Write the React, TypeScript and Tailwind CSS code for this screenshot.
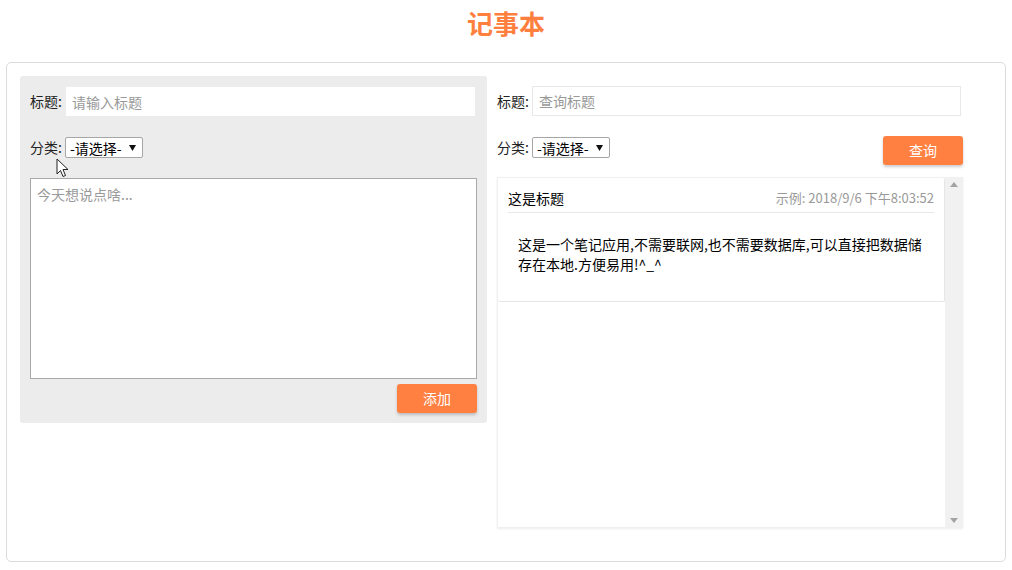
import * as React from "react";

const font = { fontFamily: '"Noto Sans CJK SC", "Noto Sans", sans-serif' };

function FakeSelect() {
  return (
    <div className="flex h-[21px] w-[78px] items-center justify-between rounded-[2px] border border-[#a6a6a6] bg-white pl-[4px] pr-[6px] text-[14px] leading-none text-black">
      <span>-请选择-</span>
      <svg width="7" height="7" viewBox="0 0 7 7"><path d="M0 1 L7 1 L3.5 7 Z" fill="#111" /></svg>
    </div>
  );
}

function OrangeButton({ label }: { label: string }) {
  return (
    <button className="h-[29px] w-[80px] rounded-[3px] bg-[#ff8040] text-[14px] text-white shadow-[0_2px_3px_rgba(0,0,0,0.2)]">
      {label}
    </button>
  );
}

function Cursor() {
  return (
    <svg className="absolute left-[36px] top-[82px]" width="14" height="20" viewBox="0 0 14 20">
      <path d="M1 1 L1 16 L4.5 12.5 L7 18.5 L9.5 17.5 L7 11.5 L12 11.5 Z" fill="white" stroke="#222" strokeWidth="1" strokeLinejoin="round" />
    </svg>
  );
}

export default function App() {
  const [title, setTitle] = React.useState("");
  const [query, setQuery] = React.useState("");
  const [body, setBody] = React.useState("");

  return (
    <div className="h-[570px] w-[1012px] bg-white text-[14px] text-[#222]" style={font}>
      <h1 className="flex h-[62px] justify-center pt-[4px] text-[26px] font-bold leading-[38px] text-[#ff7f3f]">记事本</h1>

      <div className="mx-[6px] flex h-[500px] w-[1000px] gap-[10px] rounded-[5px] border border-[#dcdcdc] px-[13px] py-[13px]">
        {/* left: add note */}
        <div className="relative flex h-[347px] w-[467px] flex-col rounded-[3px] bg-[#ececec] px-[10px] pt-[11px]">
          <div className="flex h-[29px] items-center gap-[3px]">
            <span className="w-[33px]">标题:</span>
            <input
              value={title}
              onChange={(e) => setTitle(e.target.value)}
              placeholder="请输入标题"
              className="h-[29px] w-[409px] bg-white px-[6px] text-[14px] outline-none placeholder:text-[#999]"
            />
          </div>
          <div className="mt-[21px] flex h-[21px] items-center gap-[2px]">
            <span className="w-[33px]">分类:</span>
            <FakeSelect />
          </div>
          <textarea
            value={body}
            onChange={(e) => setBody(e.target.value)}
            placeholder="今天想说点啥..."
            className="mt-[20px] h-[201px] w-[447px] resize-none border border-[#a9a9a9] bg-white px-[6px] py-[5px] text-[14px] leading-[20px] outline-none placeholder:text-[#999]"
          />
          <div className="mt-[5px] flex justify-end">
            <OrangeButton label="添加" />
          </div>
          <Cursor />
        </div>

        {/* right: query + list */}
        <div className="flex w-[466px] flex-col pt-[10px]">
          <div className="flex h-[30px] items-center gap-[3px]">
            <span className="w-[32px]">标题:</span>
            <input
              value={query}
              onChange={(e) => setQuery(e.target.value)}
              placeholder="查询标题"
              className="h-[30px] w-[429px] border border-[#e8e8e8] bg-white px-[6px] text-[14px] outline-none placeholder:text-[#999]"
            />
          </div>
          <div className="mt-[20px] flex h-[30px] items-start justify-between">
            <div className="mt-[1px] flex items-center gap-[3px]">
              <span className="w-[32px]">分类:</span>
              <FakeSelect />
            </div>
            <OrangeButton label="查询" />
          </div>

          <div className="mt-[11px] flex h-[351px] border border-[#f0f0f0] shadow-[0_1px_2px_rgba(0,0,0,0.08)]">
            <div className="flex-1 bg-white">
              <div className="h-[124px] rounded-[2px] border-b border-r border-[#e6e6e6] px-[10px]">
                <div className="flex h-[35px] items-end justify-between border-b border-[#e8e8e8] pb-[5px] leading-[18px]">
                  <span className="text-black">这是标题</span>
                  <span className="text-[13px] text-[#999]">示例: 2018/9/6 下午8:03:52</span>
                </div>
                <p className="max-w-[426px] px-[10px] pt-[21px] leading-[20px] text-black">
                  这是一个笔记应用,不需要联网,也不需要数据库,可以直接把数据储存在本地.方便易用!^_^
                </p>
              </div>
            </div>
            <div className="flex w-[17px] flex-col items-center justify-between bg-[#f1f1f1] py-[4px]">
              <svg width="8" height="5" viewBox="0 0 8 5"><path d="M0 5 L4 0 L8 5 Z" fill="#a3a3a3" /></svg>
              <svg width="8" height="5" viewBox="0 0 8 5"><path d="M0 0 L4 5 L8 0 Z" fill="#a3a3a3" /></svg>
            </div>
          </div>
        </div>
      </div>
    </div>
  );
}
